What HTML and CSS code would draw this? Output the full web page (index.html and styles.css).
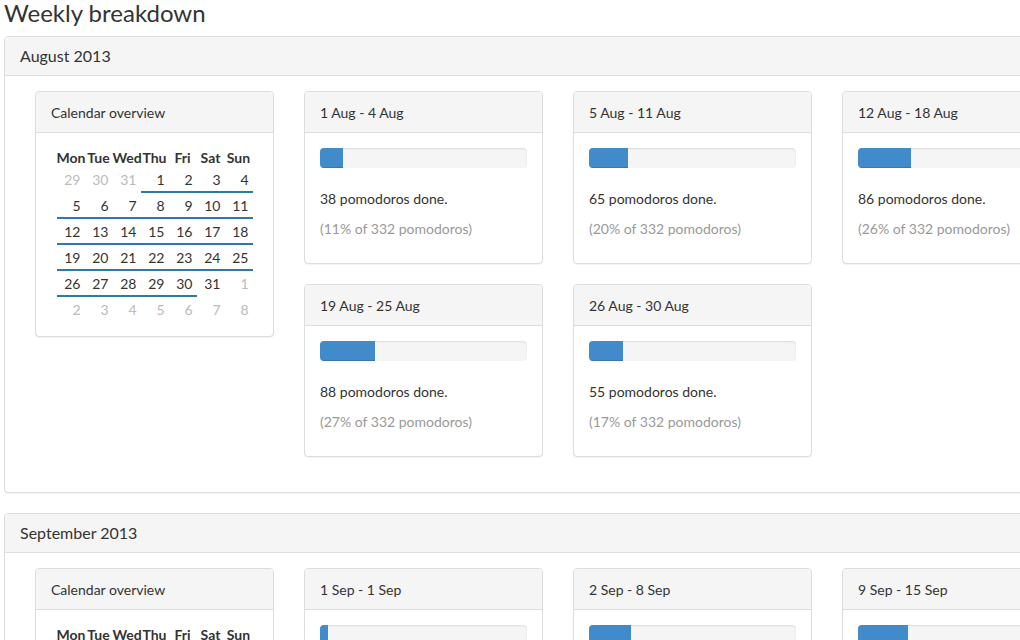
FILE: index.html
```html
<!DOCTYPE html>
<html>
<head>
<meta charset="utf-8">
<title>Weekly breakdown</title>
<link rel="stylesheet" href="styles.css">
</head>
<body>
<div class="page">
  <h1 class="title">Weekly breakdown</h1>

  <section class="panel">
    <div class="panel-heading">August 2013</div>
    <div class="panel-body">
      <div class="card cal-card">
        <div class="card-heading">Calendar overview</div>
        <div class="card-body">
          <table class="cal">
            <thead><tr><th>Mon</th><th>Tue</th><th>Wed</th><th>Thu</th><th>Fri</th><th>Sat</th><th>Sun</th></tr></thead>
            <tbody>
              <tr><td class="out">29</td><td class="out">30</td><td class="out">31</td><td class="in">1</td><td class="in">2</td><td class="in">3</td><td class="in">4</td></tr>
              <tr><td class="in">5</td><td class="in">6</td><td class="in">7</td><td class="in">8</td><td class="in">9</td><td class="in">10</td><td class="in">11</td></tr>
              <tr><td class="in">12</td><td class="in">13</td><td class="in">14</td><td class="in">15</td><td class="in">16</td><td class="in">17</td><td class="in">18</td></tr>
              <tr><td class="in">19</td><td class="in">20</td><td class="in">21</td><td class="in">22</td><td class="in">23</td><td class="in">24</td><td class="in">25</td></tr>
              <tr><td class="in">26</td><td class="in">27</td><td class="in">28</td><td class="in">29</td><td class="in">30</td><td>31</td><td class="out">1</td></tr>
              <tr><td class="out">2</td><td class="out">3</td><td class="out">4</td><td class="out">5</td><td class="out">6</td><td class="out">7</td><td class="out">8</td></tr>
            </tbody>
          </table>
        </div>
      </div>

      <div class="weeks">
        <div class="card">
          <div class="card-heading">1 Aug - 4 Aug</div>
          <div class="card-body">
            <div class="progress"><div class="bar" style="width:11%"></div></div>
            <p class="done">38 pomodoros done.</p>
            <p class="share">(11% of 332 pomodoros)</p>
          </div>
        </div>

        <div class="card">
          <div class="card-heading">5 Aug - 11 Aug</div>
          <div class="card-body">
            <div class="progress"><div class="bar" style="width:19%"></div></div>
            <p class="done">65 pomodoros done.</p>
            <p class="share">(20% of 332 pomodoros)</p>
          </div>
        </div>

        <div class="card">
          <div class="card-heading">12 Aug - 18 Aug</div>
          <div class="card-body">
            <div class="progress"><div class="bar" style="width:25.5%"></div></div>
            <p class="done">86 pomodoros done.</p>
            <p class="share">(26% of 332 pomodoros)</p>
          </div>
        </div>

        <div class="card">
          <div class="card-heading">19 Aug - 25 Aug</div>
          <div class="card-body">
            <div class="progress"><div class="bar" style="width:26.5%"></div></div>
            <p class="done">88 pomodoros done.</p>
            <p class="share">(27% of 332 pomodoros)</p>
          </div>
        </div>

        <div class="card">
          <div class="card-heading">26 Aug - 30 Aug</div>
          <div class="card-body">
            <div class="progress"><div class="bar" style="width:16.5%"></div></div>
            <p class="done">55 pomodoros done.</p>
            <p class="share">(17% of 332 pomodoros)</p>
          </div>
        </div>
      </div>
    </div>
  </section>

  <section class="panel">
    <div class="panel-heading">September 2013</div>
    <div class="panel-body">
      <div class="card cal-card">
        <div class="card-heading">Calendar overview</div>
        <div class="card-body">
          <table class="cal">
            <thead><tr><th>Mon</th><th>Tue</th><th>Wed</th><th>Thu</th><th>Fri</th><th>Sat</th><th>Sun</th></tr></thead>
            <tbody>
              <tr><td class="out">26</td><td class="out">27</td><td class="out">28</td><td class="out">29</td><td class="out">30</td><td class="out">31</td><td class="in">1</td></tr>
              <tr><td class="in">2</td><td class="in">3</td><td class="in">4</td><td class="in">5</td><td class="in">6</td><td class="in">7</td><td class="in">8</td></tr>
              <tr><td class="in">9</td><td class="in">10</td><td class="in">11</td><td class="in">12</td><td class="in">13</td><td class="in">14</td><td class="in">15</td></tr>
              <tr><td>16</td><td>17</td><td>18</td><td>19</td><td>20</td><td>21</td><td>22</td></tr>
              <tr><td>23</td><td>24</td><td>25</td><td>26</td><td>27</td><td>28</td><td>29</td></tr>
              <tr><td>30</td><td class="out">1</td><td class="out">2</td><td class="out">3</td><td class="out">4</td><td class="out">5</td><td class="out">6</td></tr>
            </tbody>
          </table>
        </div>
      </div>

      <div class="weeks">
        <div class="card">
          <div class="card-heading">1 Sep - 1 Sep</div>
          <div class="card-body">
            <div class="progress"><div class="bar" style="width:4%"></div></div>
            <p class="done">12 pomodoros done.</p>
            <p class="share">(4% of 310 pomodoros)</p>
          </div>
        </div>

        <div class="card">
          <div class="card-heading">2 Sep - 8 Sep</div>
          <div class="card-body">
            <div class="progress"><div class="bar" style="width:20.5%"></div></div>
            <p class="done">64 pomodoros done.</p>
            <p class="share">(21% of 310 pomodoros)</p>
          </div>
        </div>

        <div class="card">
          <div class="card-heading">9 Sep - 15 Sep</div>
          <div class="card-body">
            <div class="progress"><div class="bar" style="width:24%"></div></div>
            <p class="done">74 pomodoros done.</p>
            <p class="share">(24% of 310 pomodoros)</p>
          </div>
        </div>
      </div>
    </div>
  </section>
</div>
</body>
</html>
```

FILE: styles.css
```css
*, *::before, *::after {
  box-sizing: border-box;
}

html, body {
  margin: 0;
  padding: 0;
  overflow: hidden;
  background: #fff;
}

body {
  font-family: Lato, "Open Sans", "Liberation Sans", sans-serif;
  font-size: 14px;
  line-height: 20px;
  color: #333;
}

.page {
  padding: 0 0 0 4px;
  width: 1200px;
}

.title {
  font-size: 24px;
  font-weight: 400;
  line-height: 26px;
  margin: 0 0 10px;
  color: #333;
}

.panel {
  width: 1108px;
  border: 1px solid #ddd;
  border-radius: 4px;
  background: #fff;
  box-shadow: 0 1px 1px rgba(0, 0, 0, 0.05);
  margin-bottom: 20px;
}

.panel-heading {
  background: #f5f5f5;
  border-bottom: 1px solid #ddd;
  border-radius: 3px 3px 0 0;
  padding: 10px 15px;
  font-size: 16px;
  line-height: 18px;
  color: #333;
}

.panel-body {
  display: flex;
  align-items: flex-start;
  gap: 30px;
  padding: 15px 30px 35px;
}

.cal-card {
  flex: 0 0 239px;
}

.weeks {
  display: grid;
  grid-template-columns: repeat(3, 239px);
  column-gap: 30px;
  row-gap: 20px;
  align-items: start;
}

.card {
  border: 1px solid #ddd;
  border-radius: 4px;
  background: #fff;
  box-shadow: 0 1px 1px rgba(0, 0, 0, 0.05);
}

.card-heading {
  background: #f5f5f5;
  border-bottom: 1px solid #ddd;
  border-radius: 3px 3px 0 0;
  padding: 11px 15px 9px;
  line-height: 20px;
}

.card-body {
  padding: 15px;
}

.progress {
  height: 20px;
  background: #f5f5f5;
  border-radius: 4px;
  box-shadow: inset 0 1px 2px rgba(0, 0, 0, 0.1);
  overflow: hidden;
  margin-bottom: 21px;
}

.bar {
  height: 100%;
  background: #428bca;
  box-shadow: inset 0 -1px 0 rgba(0, 0, 0, 0.15);
}

.done {
  margin: 0 0 10px;
}

.share {
  margin: 0 0 9px;
  color: #999;
}

.cal {
  table-layout: fixed;
  width: 196px;
  margin: 0 auto;
  border-collapse: collapse;
}

.cal th {
  width: 28px;
  padding: 0;
  line-height: 19px;
  font-weight: 700;
  text-align: center;
  white-space: nowrap;
}

.cal td {
  padding: 3px 4px 1px 0;
  line-height: 20px;
  text-align: right;
  border-bottom: 2px solid transparent;
}

.cal td.in {
  border-bottom-color: #2f7aa3;
}

.cal td.out {
  color: #bbb;
}

.cal tbody tr:last-child td {
  border-bottom: 0;
  padding-bottom: 1px;
}
```
